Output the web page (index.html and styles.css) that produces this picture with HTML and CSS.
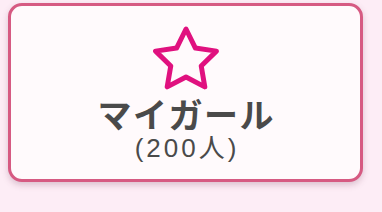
FILE: index.html
```html
<!DOCTYPE html>
<html lang="ja">
<head>
<meta charset="utf-8">
<link rel="stylesheet" href="styles.css">
</head>
<body>
<div class="card">
  <svg class="star" width="70" height="66" viewBox="-35 -35 70 66">
    <polygon points="0,-32 9.4,-12.94 30.43,-9.89 15.22,4.94 18.81,25.89 0,16 -18.81,25.89 -15.22,4.94 -30.43,-9.89 -9.4,-12.94" fill="none" stroke="#e0117f" stroke-width="5" stroke-linejoin="round"/>
  </svg>
  <div class="title">マイガール</div>
  <div class="count">(200人)</div>
</div>
</body>
</html>
```
FILE: styles.css
```css
html, body {
  margin: 0;
  padding: 0;
}
body {
  width: 382px;
  height: 212px;
  background: #fdedf6;
  padding: 3px 0 0 8px;
  box-sizing: border-box;
  overflow: hidden;
}
.card {
  width: 355px;
  height: 179px;
  box-sizing: border-box;
  border: 3px solid #d65a82;
  border-radius: 14px;
  background: #fffafc;
  box-shadow: 0 3px 6px rgba(120, 60, 90, 0.25);
  display: flex;
  flex-direction: column;
  align-items: center;
  padding-top: 20px;
}
.star {
  display: block;
}
.title {
  font-family: "Noto Sans CJK JP", sans-serif;
  font-weight: 700;
  font-size: 34px;
  line-height: 34px;
  letter-spacing: 1.5px;
  margin-right: -1.5px;
  color: #4a4a4a;
  margin-top: 5px;
}
.count {
  font-family: "Liberation Sans", "Noto Sans CJK JP", sans-serif;
  font-size: 26px;
  line-height: 28px;
  letter-spacing: 3px;
  margin-right: -3px;
  color: #4a4a4a;
  margin-top: 3px;
}
```
